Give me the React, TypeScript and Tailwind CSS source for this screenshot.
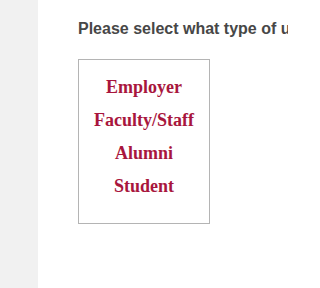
const userTypes = ["Employer", "Faculty/Staff", "Alumni", "Student"];

export default function App() {
	return (
		<div className="flex h-[288px] w-[288px] overflow-hidden bg-white">
			<div className="w-[38px] shrink-0 bg-[#f1f1f1]" />
			<div className="flex-1 pl-[40px] pt-[19px]">
				<h2 className="whitespace-nowrap font-['Liberation_Sans',Arial,sans-serif] text-[16px] font-bold leading-[19px] text-[#474747]">
					Please select what type of user you are:
				</h2>
				<ul className="mt-[21px] h-[165px] w-[132px] border border-[#b4b4b4] pt-[11px] text-center font-['Liberation_Serif','Times_New_Roman',serif] text-[18px] font-bold leading-[33px] text-[#a8163d]">
					{userTypes.map(type => (
						<li key={type}>{type}</li>
					))}
				</ul>
			</div>
		</div>
	);
}
